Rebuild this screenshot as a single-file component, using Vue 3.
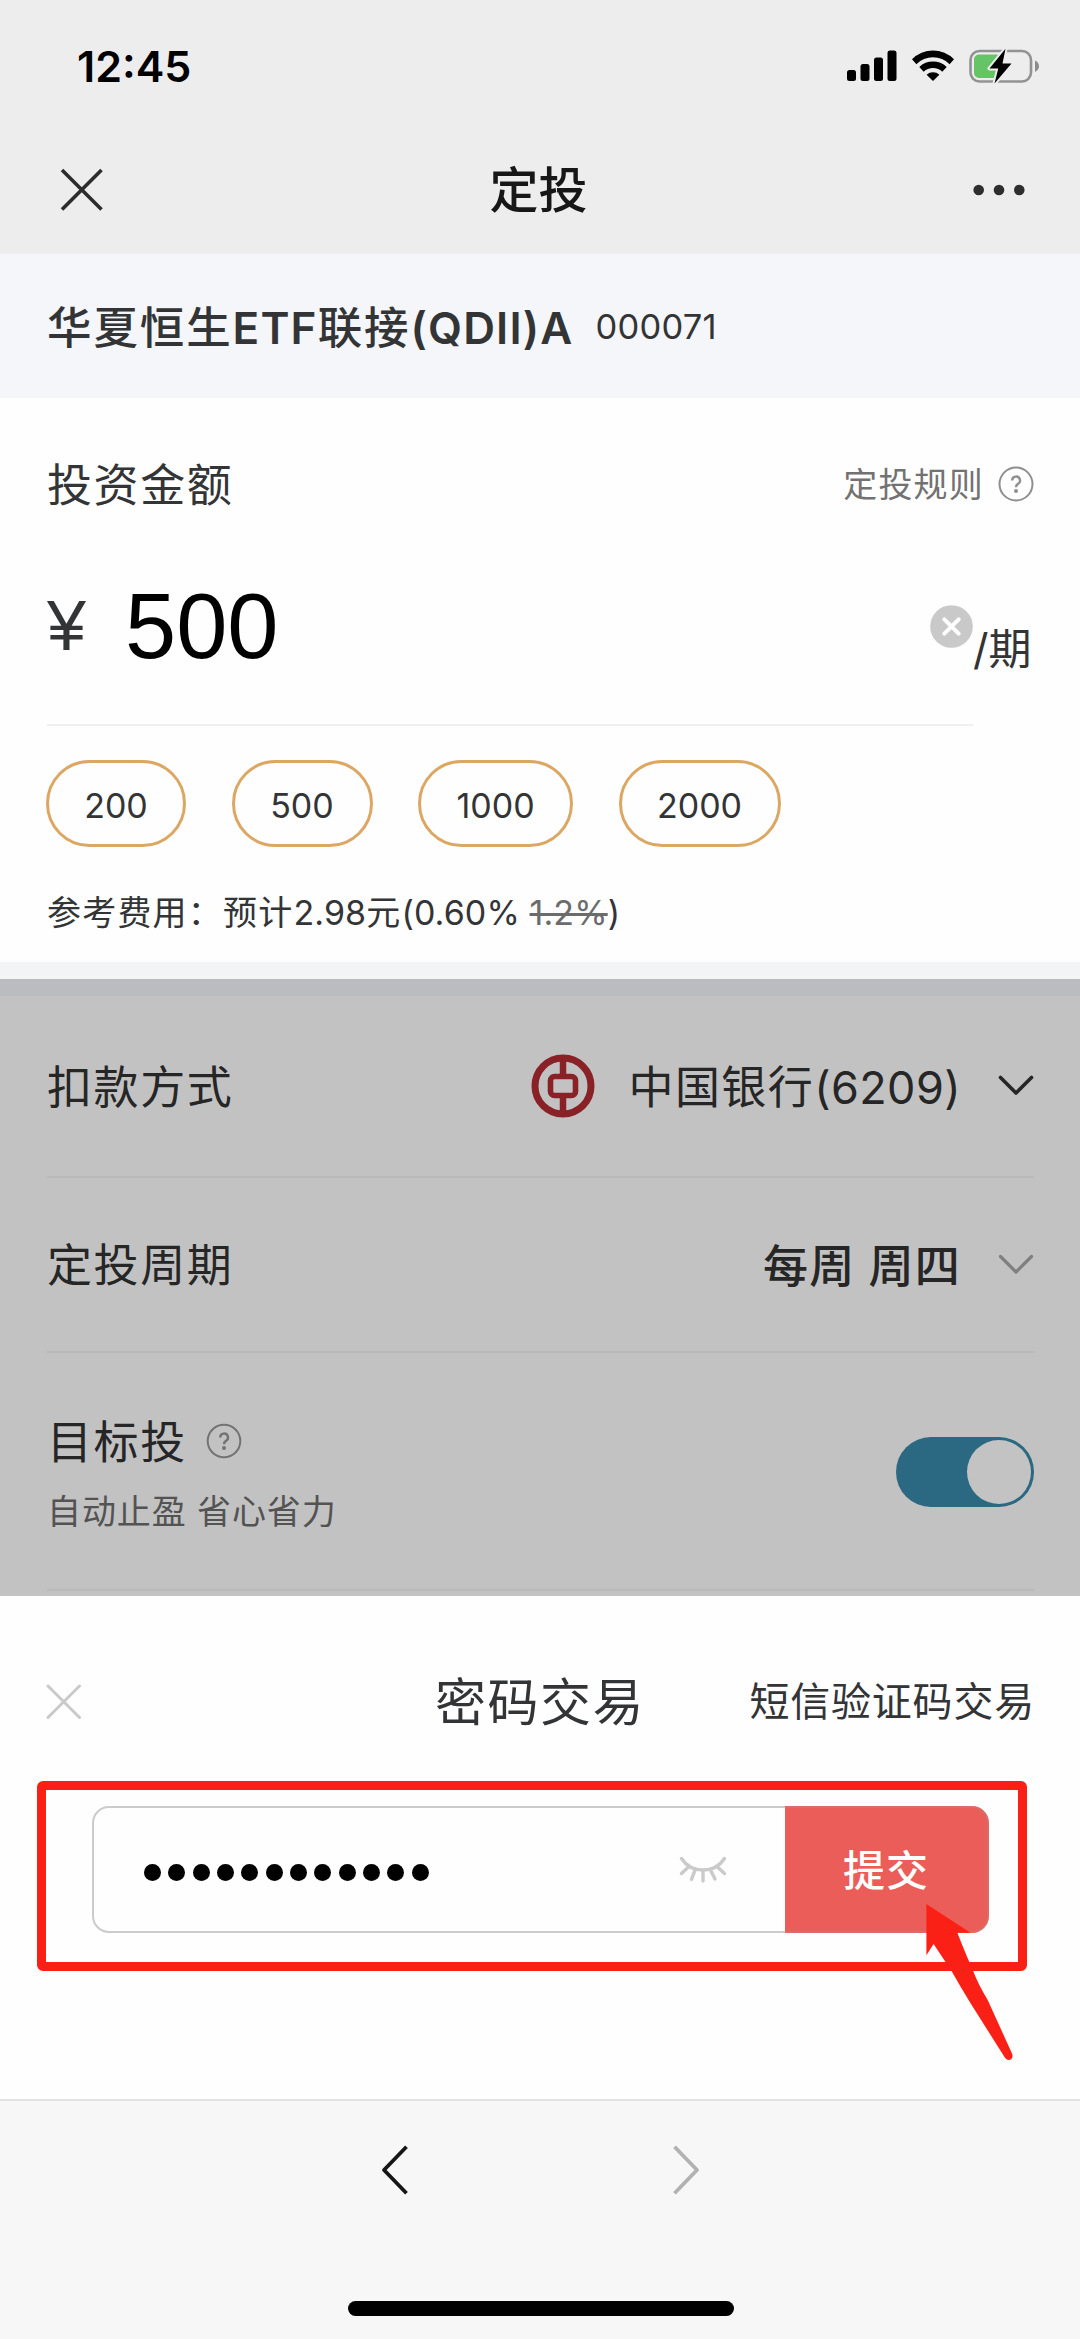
<script setup>
const amounts = [
  { value: '200', width: 140 },
  { value: '500', width: 141 },
  { value: '1000', width: 155 },
  { value: '2000', width: 162 },
]
</script>

<template>
  <div class="page">
    <header class="header">
      <div class="status">
        <span class="time">12:45</span>
        <div class="status-icons">
          <svg class="signal" width="50" height="34" viewBox="0 0 50 34">
            <rect x="0" y="21" width="9" height="11" rx="2.5" />
            <rect x="13.5" y="15" width="9" height="17" rx="2.5" />
            <rect x="27" y="8.500" width="9" height="23.500" rx="2.5" />
            <rect x="40.500" y="1.500" width="9" height="30.500" rx="2.5" />
          </svg>
          <svg class="wifi" width="44" height="34" viewBox="0 0 44 34">
            <path d="M1 10.300A29.500 29.500 0 0 1 43 10.300L38.600 15.200A23.500 23.500 0 0 0 5.400 15.200Z" />
            <path d="M8.300 18A19.500 19.500 0 0 1 35.700 18L31.300 22.800A13.500 13.500 0 0 0 12.700 22.800Z" />
            <path d="M15.600 25.700A9.500 9.500 0 0 1 28.400 25.700L22 32Z" />
          </svg>
          <svg class="battery" width="71" height="36" viewBox="0 0 71 36">
            <rect x="1.500" y="3" width="60.500" height="30.500" rx="9" fill="none" stroke="#929292" stroke-width="2.6" />
            <path d="M66 12.500q4 2 4 5.700t-4 5.700z" fill="#8c8c8c" />
            <rect x="5" y="6.500" width="27" height="23.500" rx="5" fill="#65c466" />
            <path d="M36.500 0.800L20.500 20.500h8.800L25.500 35.500L42.500 15.500h-9z" fill="#000" stroke="#ededed" stroke-width="4" stroke-linejoin="round" paint-order="stroke" />
          </svg>
        </div>
      </div>
      <div class="nav">
        <svg width="44" height="44" viewBox="0 0 44 44"><path d="M2 2L41.500 41.500M41.500 2L2 41.500" stroke="#2c2c2c" stroke-width="3.6" /></svg>
        <h1>定投</h1>
        <svg class="more" width="52" height="12" viewBox="0 0 52 12" fill="#2e2e2e">
          <circle cx="5.700" cy="6" r="5.300" /><circle cx="26" cy="6" r="5.300" /><circle cx="46.300" cy="6" r="5.300" />
        </svg>
      </div>
    </header>

    <section class="fund">
      <span class="fund-name">华夏恒生<b>ETF</b>联接<b>(QDII)A</b></span>
      <span class="fund-code">000071</span>
    </section>

    <section class="invest">
      <div class="invest-head">
        <span class="label">投资金额</span>
        <div class="rules">
          <span>定投规则</span>
          <svg width="36" height="36" viewBox="0 0 36 36" fill="none" stroke="#8f8f8f">
            <circle cx="18" cy="18" r="16.500" stroke-width="2" />
            <path d="M14.200 14.500a3.900 3.900 0 1 1 5.800 3.400q-2 1.100-2 3.300" stroke-width="2.400" />
            <circle cx="18" cy="25" r="2" fill="#8f8f8f" stroke="none" />
          </svg>
        </div>
      </div>
      <div class="amount">
        <span class="yen">¥</span>
        <span class="amount-value">500</span>
        <svg class="clear" width="43" height="43" viewBox="0 0 43 43">
          <circle cx="21.500" cy="21.500" r="21.300" fill="#c9c9c9" />
          <path d="M14.300 14.300L28.700 28.700M28.700 14.300L14.300 28.700" stroke="#fff" stroke-width="4" stroke-linecap="round" />
        </svg>
        <span class="per">/期</span>
      </div>
      <div class="amount-line"></div>
      <div class="chips">
        <button v-for="a in amounts" :key="a.value" class="chip" :style="{ width: a.width + 'px' }">{{ a.value }}</button>
      </div>
      <p class="fee">参考费用：预计<span class="num">2.98</span>元<span class="num">(0.60% <s>1.2%</s>)</span></p>
    </section>
    <div class="strip"></div>

    <section class="options">
      <div class="row row-pay">
        <span class="label">扣款方式</span>
        <div class="value">
          <svg class="bank" width="64" height="64" viewBox="0 0 64 64" fill="none" stroke="#892126">
            <circle cx="32" cy="32" r="28" stroke-width="7" />
            <rect x="19.500" y="22.500" width="25" height="19" rx="4" stroke-width="5.600" />
            <path d="M32 5v17M32 42v17" stroke-width="6.500" />
          </svg>
          <span class="bank-name">中国银行<span class="num">(6209)</span></span>
          <svg width="36" height="24" viewBox="0 0 36 24"><path d="M2.500 3.500L18 19L33.500 3.500" fill="none" stroke="#262626" stroke-width="3.600" stroke-linecap="round" stroke-linejoin="round" /></svg>
        </div>
      </div>
      <div class="row row-cycle">
        <span class="label">定投周期</span>
        <div class="value">
          <span class="cycle">每周 周四</span>
          <svg width="36" height="24" viewBox="0 0 36 24"><path d="M2.500 3.500L18 19L33.500 3.500" fill="none" stroke="#808080" stroke-width="3.200" stroke-linecap="round" stroke-linejoin="round" /></svg>
        </div>
      </div>
      <div class="row row-target">
        <div class="target-text">
          <div class="target-title">
            <span class="label">目标投</span>
            <svg width="36" height="36" viewBox="0 0 36 36" fill="none" stroke="#737373">
              <circle cx="18" cy="18" r="16.300" stroke-width="2" />
              <path d="M14.200 14.500a3.900 3.900 0 1 1 5.800 3.400q-2 1.100-2 3.300" stroke-width="2.400" />
              <circle cx="18" cy="25" r="2" fill="#737373" stroke="none" />
            </svg>
          </div>
          <span class="target-sub">自动止盈 省心省力</span>
        </div>
        <div class="switch"><i></i></div>
      </div>
    </section>

    <section class="sheet">
      <div class="sheet-head">
        <svg width="36" height="36" viewBox="0 0 36 36"><path d="M2 2L33.500 33.500M33.500 2L2 33.500" stroke="#c9c9c9" stroke-width="3" stroke-linecap="round" /></svg>
        <h2>密码交易</h2>
        <a>短信验证码交易</a>
      </div>
      <div class="highlight">
        <div class="password">
          <div class="dots"><i v-for="n in 12" :key="n"></i></div>
          <svg class="eye" width="48" height="30" viewBox="0 0 48 30" fill="none" stroke="#cacaca" stroke-width="3.400" stroke-linecap="round">
            <path d="M2.500 3.500Q10 15 24 15Q38 15 45.500 3.500" />
            <path d="M9.500 12L2.500 18.500M16 15L12.500 24.500M24 16V26M31.500 15L36 24M38.500 12L45.500 18.500" />
          </svg>
          <button class="submit">提交</button>
        </div>
        <svg class="pointer" width="90" height="160" viewBox="0 0 90 160">
          <path d="M2.400 0L46.400 28.700L33.400 28.700Q40 46 49.200 67Q54 80 63.700 96L88 149.500C90.500 155.500 83.500 158.500 80.500 153L46.400 99Q36 82 27.500 67L9.600 40L2.400 51.300Z" fill="#fb2015" />
        </svg>
      </div>
    </section>

    <footer class="toolbar">
      <div class="arrows">
        <svg width="28" height="50" viewBox="0 0 28 50"><path d="M25.500 1.700L3 25L25.500 48.300" fill="none" stroke="#161616" stroke-width="3.800" stroke-linejoin="round" /></svg>
        <svg width="28" height="50" viewBox="0 0 28 50"><path d="M2.500 1.700L25 25L2.500 48.300" fill="none" stroke="#b2b2b2" stroke-width="3.800" stroke-linejoin="round" /></svg>
      </div>
      <div class="home"></div>
    </footer>
  </div>
</template>

<style>
body {
  background: #fff;
}
</style>

<style scoped>
* {
  box-sizing: border-box;
  margin: 0;
  padding: 0;
}
svg {
  display: block;
  flex: none;
}
button {
  font-family: inherit;
  border: 0;
  background: none;
}
.page {
  width: 1080px;
  height: 2339px;
  overflow: hidden;
  display: flex;
  flex-direction: column;
  background: #fefefe;
  color: #333436;
  font-family: Inter, "Noto Sans CJK SC", sans-serif;
  white-space: nowrap;
}
.page > * {
  flex: none;
}
.header {
  height: 254px;
  background: #ededed;
}
.status {
  height: 132px;
  padding: 0 40px 0 77px;
  display: flex;
  align-items: center;
  justify-content: space-between;
}
.time {
  font-size: 43px;
  font-weight: 600;
  color: #000;
}
.status-icons {
  display: flex;
  align-items: center;
}
.wifi {
  margin-left: 14px;
}
.battery {
  margin-left: 14px;
}
.nav {
  height: 116px;
  padding: 0 60px;
  display: grid;
  grid-template-columns: 1fr auto 1fr;
  align-items: center;
}
.nav h1 {
  margin-right: 3px;
  padding-top: 2px;
  font-size: 49px;
  line-height: 60px;
  font-weight: 500;
  color: #171717;
}
.more {
  justify-self: end;
  margin-right: -5px;
}
.fund {
  height: 144px;
  padding: 0 47px;
  display: flex;
  align-items: center;
  background: #f4f6f9;
}
.fund-name {
  padding-bottom: 3px;
  font-size: 44.500px;
  font-weight: 500;
  letter-spacing: 1.900px;
}
.fund-name b {
  font-size: 44px;
  font-weight: 600;
  letter-spacing: 1.150px;
}
.fund-code {
  margin-left: 22px;
  font-size: 34.500px;
  font-weight: 400;
  letter-spacing: 0.200px;
}
.invest {
  height: 564px;
  padding: 0 46px 0 47px;
}
.invest-head {
  height: 172px;
  display: flex;
  align-items: center;
  justify-content: space-between;
}
.label {
  padding-top: 3px;
  font-size: 45px;
  letter-spacing: 1.600px;
  line-height: 62px;
  font-weight: 400;
}
.rules {
  display: flex;
  align-items: center;
  gap: 14px;
  font-size: 34px;
  letter-spacing: 1.200px;
  line-height: 40px;
  font-weight: 400;
  color: #727272;
}
.rules span {
  padding-top: 2px;
}
.amount {
  height: 112px;
  display: flex;
  align-items: center;
}
.yen {
  width: 78px;
  font-family: "Liberation Sans", sans-serif;
  font-size: 70px;
  line-height: 112px;
}
.amount-value {
  flex: 1;
  font-family: "Liberation Sans", sans-serif;
  font-size: 92px;
  line-height: 112px;
  color: #000;
}
.per {
  width: 61px;
  margin-top: 45px;
  font-size: 43px;
  line-height: 60px;
}
.amount-line {
  width: 926px;
  height: 2px;
  margin-top: 42px;
  background: #f0f0f0;
}
.chips {
  margin: 34px 0 0 -1px;
  display: flex;
  gap: 45.500px;
}
.chip {
  height: 87px;
  border: 3px solid #dba763;
  border-radius: 44px;
  font-size: 34px;
  color: #333436;
  padding-top: 3px;
}
.fee {
  margin-top: 46px;
  font-size: 34px;
  line-height: 40px;
  letter-spacing: 1.200px;
  font-weight: 400;
}
.fee .num {
  font-size: 34px;
  letter-spacing: 0.100px;
}
.fee s {
  color: #6c6c6c;
  text-decoration-thickness: 2.500px;
}
.strip {
  height: 17px;
  background: #f2f4f5;
}
.options {
  height: 617px;
  padding: 0 46px 0 47px;
  border-top: 17px solid #babcbf;
  background: #c2c2c2;
  color: #262626;
}
.row {
  display: flex;
  align-items: center;
  justify-content: space-between;
  border-bottom: 2px solid #bababa;
}
.row-pay {
  height: 182px;
}
.row-cycle {
  height: 175px;
}
.row-target {
  height: 238px;
}
.value {
  display: flex;
  align-items: center;
}
.bank {
  margin-right: 34px;
}
.bank-name {
  margin-right: 37px;
  padding-bottom: 3px;
  font-size: 45px;
  letter-spacing: 1.400px;
  font-weight: 400;
}
.bank-name .num {
  letter-spacing: 0.400px;
}
.cycle {
  margin-right: 37px;
  padding-bottom: 2px;
  font-size: 45px;
  letter-spacing: 1.200px;
  font-weight: 500;
}
.target-text {
  display: flex;
  flex-direction: column;
  gap: 18px;
  padding-bottom: 2px;
}
.target-title {
  display: flex;
  align-items: center;
  gap: 19px;
}
.target-sub {
  font-size: 34px;
  line-height: 40px;
  letter-spacing: 0.900px;
  font-weight: 400;
  color: #535353;
}
.switch {
  width: 138px;
  height: 70px;
  margin-top: 2px;
  padding: 3px;
  display: flex;
  justify-content: flex-end;
  border-radius: 35px;
  background: #2b6881;
}
.switch i {
  width: 64px;
  height: 64px;
  border-radius: 50%;
  background: #c3c3c3;
}
.sheet {
  height: 503px;
}
.sheet-head {
  height: 185px;
  padding: 27px 46px 0;
  display: grid;
  grid-template-columns: 1fr auto 1fr;
  align-items: center;
}
.sheet-head h2 {
  padding-top: 1px;
  font-size: 51px;
  line-height: 60px;
  letter-spacing: 1.500px;
  font-weight: 400;
}
.sheet-head a {
  justify-self: end;
  margin-right: -1px;
  font-size: 40px;
  line-height: 60px;
  letter-spacing: 0.800px;
  font-weight: 400;
}
.highlight {
  position: relative;
  width: 990px;
  height: 190px;
  margin-left: 37px;
  padding: 16px 29px 28px 46px;
  border: 9px solid #fb2015;
  border-radius: 6px;
}
.password {
  height: 127px;
  display: flex;
  align-items: center;
  border: 2.500px solid #cbcbcb;
  border-radius: 17px;
}
.dots {
  flex: 1;
  padding: 5px 0 0 50px;
  display: flex;
  gap: 7.350px;
}
.dots i {
  width: 17px;
  height: 17px;
  border-radius: 50%;
  background: #000;
}
.eye {
  margin-right: 60px;
}
.submit {
  align-self: stretch;
  width: 204px;
  margin: -2px;
  padding-bottom: 4px;
  border: 2px solid #dc6c67;
  border-left: 0;
  border-radius: 0 17px 17px 0;
  background: #ea5d58;
  color: #fff;
  font-size: 42px;
  letter-spacing: 1px;
  font-weight: 500;
}
.pointer {
  position: absolute;
  left: 878px;
  top: 114px;
}
.toolbar {
  height: 240px;
  border-top: 2px solid #e3e3e3;
  background: #f7f7f7;
  display: flex;
  flex-direction: column;
  align-items: center;
}
.arrows {
  width: 319px;
  margin-top: 44px;
  display: flex;
  justify-content: space-between;
}
.home {
  width: 386px;
  height: 15px;
  margin: 106px 0 0 1px;
  border-radius: 8px;
  background: #000;
}
</style>
